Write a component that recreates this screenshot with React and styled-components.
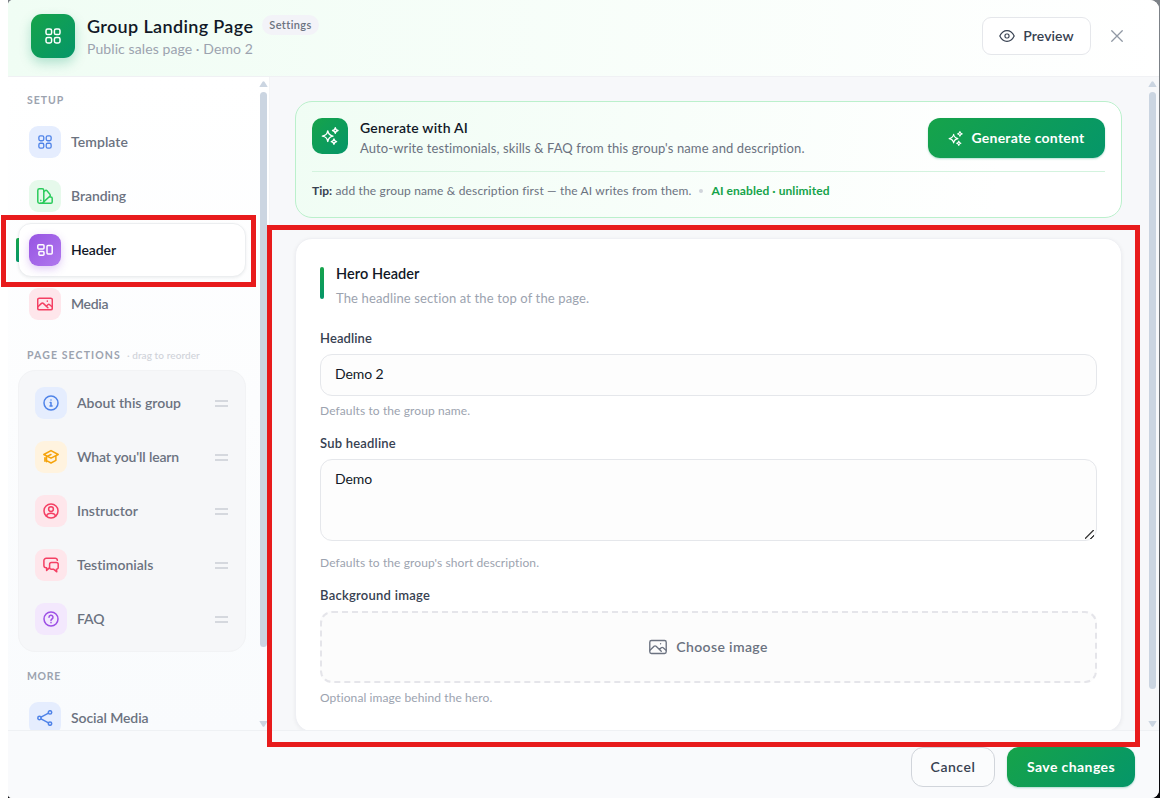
import React from 'react';
import styled, { createGlobalStyle, css } from 'styled-components';

const GlobalStyle = createGlobalStyle`
  * { box-sizing: border-box; }
  body {
    margin: 0;
    background: #fff;
    font-family: Lato, "Liberation Sans", sans-serif;
    font-variant-ligatures: none;
    overflow: hidden;
  }
  button, input, textarea { font-family: inherit; font-variant-ligatures: none; }
`;

const GREEN = 'linear-gradient(135deg, #16a34a 0%, #059669 100%)';

/* ---------- frame ---------- */

const Backdrop = styled.div`
  width: 1160px;
  height: 798px;
  padding: 0 1px 0 8px;
  background: linear-gradient(90deg, #fff 8px, transparent 8px),
    linear-gradient(180deg, #7d8288 0%, #6f757b 60%, #08080c 97%);
  overflow: hidden;
`;

const Modal = styled.div`
  height: 798px;
  display: flex;
  flex-direction: column;
  background: #fff;
  border-radius: 5px 9px 8px 4px;
  overflow: hidden;
`;

const Header = styled.header`
  display: flex;
  align-items: center;
  flex: none;
  height: 77px;
  padding: 0 32px 4px 23px;
  border-bottom: 1px solid #f0f1f4;
  background: linear-gradient(90deg, #f0fdf4 0%, #ffffff 100%);
`;

const Logo = styled.div`
  display: grid;
  place-items: center;
  width: 44px;
  height: 44px;
  margin-right: 12px;
  border-radius: 11px;
  color: #fff;
  background: ${GREEN};
  box-shadow: 0 5px 12px rgba(5, 150, 105, 0.27);
`;

const HeaderText = styled.div`
  flex: 1;
  display: flex;
  flex-direction: column;
  gap: 1px;
`;

const TitleRow = styled.div`
  display: flex;
  align-items: center;
  gap: 9px;
  height: 23px;
`;

const Title = styled.h1`
  margin: 0;
  padding-top: 1px;
  font-size: 18px;
  line-height: 24px;
  font-weight: 600;
  letter-spacing: 0.35px;
  color: #111827;
`;

const Pill = styled.span`
  height: 20px;
  padding: 0 7.5px 0 7px;
  border-radius: 10px;
  background: #f3f3f8;
  font-size: 11px;
  line-height: 20px;
  font-weight: 600;
  letter-spacing: 0.38px;
  color: #6b7280;
`;

const Subtitle = styled.div`
  font-size: 14px;
  line-height: 21px;
  letter-spacing: 0.09px;
  color: #9ca3af;
`;

const CloseButton = styled.button`
  display: grid;
  place-items: center;
  width: 24px;
  height: 24px;
  margin-left: 14px;
  margin-right: -2px;
  padding: 0;
  border: 0;
  background: none;
  color: #9098a4;
`;

const Button = styled.button`
  display: flex;
  align-items: center;
  justify-content: center;
  flex: none;
  gap: 8px;
  width: ${(p) => p.$width}px;
  height: ${(p) => p.$height || 40}px;
  padding: 0 0 2px;
  border-radius: ${(p) => p.$radius || 12}px;
  font-size: 14px;
  letter-spacing: ${(p) => p.$tracking}px;
  svg { position: relative; top: 1px; }
  ${(p) =>
    p.$primary
      ? css`
          border: 0;
          color: #fff;
          font-weight: 700;
          background: ${GREEN};
          box-shadow: 0 1px 2px rgba(5, 150, 105, 0.3);
        `
      : css`
          border: 1px solid ${p.$line || '#e5e7eb'};
          color: #374151;
          font-weight: 600;
          background: ${p.$fill || '#fff'};
        `}
`;

const Body = styled.div`
  display: flex;
  flex: none;
  height: 653px;
  min-height: 0;
`;

const Footer = styled.footer`
  display: flex;
  justify-content: flex-end;
  gap: 12px;
  flex: 1;
  padding: 16px 24px 0 0;
  border-top: 1px solid #eff1f4;
  background: #f9fafc;
`;

/* ---------- scrollbar ---------- */

const Rail = styled.div`
  display: flex;
  flex-direction: column;
  align-items: center;
  flex: none;
  width: 9px;
  margin-right: ${(p) => p.$inset || 0}px;
  padding: 4px 0 3px;
`;

const Thumb = styled.div`
  width: 7px;
  height: ${(p) => p.$length}px;
  margin: 5px 0 auto;
  border-radius: 4px;
  background: #cbd5e1;
`;

const Arrow = ({ down }) => (
  <svg width="9" height="6" viewBox="0 0 9 6" fill="#cbd5e1">
    <path d={down ? 'M.3 0H8.7L5.5 5.3Q4.5 6.4 3.5 5.3Z' : 'M.3 6H8.7L5.5.7Q4.5-.4 3.5.7Z'} />
  </svg>
);

const Scrollbar = ({ length, inset }) => (
  <Rail $inset={inset}>
    <Arrow />
    <Thumb $length={length} />
    <Arrow down />
  </Rail>
);

/* ---------- sidebar ---------- */

const Sidebar = styled.aside`
  display: flex;
  flex: none;
  width: 262px;
  padding-right: 1px;
  border-right: 1px solid #f3f4f6;
  background: linear-gradient(180deg, #ffffff 0%, #f9fbfd 100%);
`;

const Nav = styled.nav`
  flex: 1;
  overflow: hidden;
  padding: 14px 13px 0 10px;
`;

const GroupLabel = styled.div`
  display: flex;
  align-items: center;
  gap: 6px;
  height: 20px;
  margin: ${(p) => p.$margin};
  padding: 0 0 2px 9px;
  font-size: 10.5px;
  font-weight: 700;
  letter-spacing: ${(p) => p.$tracking}px;
  color: #9ca3af;
`;

const Hint = styled.span`
  font-size: 10px;
  font-weight: 500;
  letter-spacing: 0.09px;
  color: #cfd2d9;
`;

const Item = styled.div`
  position: relative;
  display: flex;
  align-items: center;
  gap: 10px;
  height: 54px;
  padding: 0 11px 0 10px;
  border: 1px solid transparent;
  border-radius: 13px;
  font-size: 14px;
  font-weight: 600;
  letter-spacing: ${(p) => p.$tracking}px;
  color: #6b7280;
  ${(p) =>
    p.$active &&
    css`
      color: #111827;
      background: #fff;
      border-color: #eceef0;
      box-shadow: 0 1px 3px rgba(15, 23, 42, 0.07);
      &::before {
        content: '';
        position: absolute;
        left: -3px;
        top: 14px;
        width: 3px;
        height: 24px;
        border-radius: 2px 0 0 2px;
        background: linear-gradient(180deg, #16a34a, #059669);
      }
    `}
`;

const ItemText = styled.span`
  flex: 1;
  padding-bottom: 2px;
`;

const IconTile = styled.span`
  display: grid;
  place-items: center;
  flex: none;
  width: 32px;
  height: 32px;
  border-radius: 9px;
  color: ${(p) => p.$color};
  background: ${(p) => p.$bg};
  box-shadow: ${(p) => p.$shadow || 'none'};
`;

const Sections = styled.div`
  padding: 5px;
  border: 1px solid #f2f3f5;
  border-radius: 17px;
  background: #f6f7f9;
`;

const Handle = styled.span`
  width: 13px;
  height: 7px;
  border-top: 2px solid #d5d8de;
  border-bottom: 2px solid #d5d8de;
`;

/* ---------- main ---------- */

const Main = styled.main`
  flex: 1;
  display: flex;
  background: #f7f8fa;
`;

const Scroll = styled.div`
  flex: 1;
  overflow: hidden;
  padding: 24px 26px 0 25px;
`;

const AiCard = styled.section`
  height: 117px;
  margin-bottom: 20px;
  padding: 16px;
  border: 1px solid #bbf0cc;
  border-radius: 17px;
  background: linear-gradient(100deg, #f0fdf4 0%, #ffffff 85%);
`;

const AiTop = styled.div`
  display: flex;
  height: 54px;
  border-bottom: 1px solid #d3f3de;
`;

const AiTile = styled.div`
  display: grid;
  place-items: center;
  width: 36px;
  height: 36px;
  margin-right: 12px;
  border-radius: 10px;
  color: #fff;
  background: ${GREEN};
`;

const AiText = styled.div`
  flex: 1;
  margin-top: -1px;
`;

const AiTitle = styled.div`
  font-size: 14px;
  line-height: 21px;
  font-weight: 600;
  letter-spacing: 0.2px;
  color: #111827;
`;

const AiDescription = styled.div`
  font-size: 13px;
  line-height: 20px;
  letter-spacing: 0.105px;
  color: #6b7280;
`;

const Tip = styled.div`
  display: flex;
  align-items: center;
  height: 18px;
  margin-top: 9px;
  font-size: 12px;
  letter-spacing: 0.15px;
  color: #6b7280;
  white-space: nowrap;
  b { width: 23.5px; letter-spacing: 0; color: #374151; }
  i { width: 4px; height: 4px; margin: 1px 8.5px 0 7.5px; border-radius: 50%; background: #d1d5db; }
  strong { letter-spacing: 0.07px; color: #16a34a; }
`;

const Card = styled.section`
  height: 494px;
  padding: 24px;
  border: 1px solid #eff0f4;
  border-radius: 17px;
  background: #fff;
  box-shadow: 0 1px 4px rgba(15, 23, 42, 0.06);
`;

const CardHead = styled.div`
  display: flex;
  gap: 12px;
  height: 45px;
  margin-bottom: 22px;
  &::before {
    content: '';
    width: 4px;
    height: 32px;
    margin-top: 4px;
    border-radius: 2px;
    background: linear-gradient(180deg, #16a34a, #059669);
  }
`;

const CardTitle = styled.h2`
  margin: 0 0 3px;
  font-size: 14.5px;
  line-height: 22px;
  font-weight: 600;
  letter-spacing: 0.07px;
  color: #111827;
`;

const CardSubtitle = styled.div`
  font-size: 13px;
  line-height: 20px;
  letter-spacing: 0.135px;
  color: #9ca3af;
`;

const Label = styled.label`
  display: block;
  height: 17px;
  margin-bottom: 7px;
  font-size: 13px;
  line-height: 17px;
  font-weight: 600;
  letter-spacing: ${(p) => p.$tracking}px;
  color: #374151;
`;

const control = css`
  display: block;
  width: 100%;
  border: 1px solid #e5e7eb;
  border-radius: 12px;
  background: #fdfdfd;
  font-size: 14px;
  line-height: 20px;
  letter-spacing: -0.1px;
  color: #111827;
  outline: none;
`;

const Input = styled.input`
  ${control}
  height: 42px;
  padding: 0 14px 3px;
`;

const TextArea = styled.textarea`
  ${control}
  height: 82px;
  padding: 9px 14px;
  resize: vertical;
  &::-webkit-resizer {
    background:
      linear-gradient(to bottom right, transparent 43%, #3f3f3f 45% 54%, transparent 56%) 4px 5px / 9px 9px no-repeat,
      linear-gradient(to bottom right, transparent 38%, #3f3f3f 42% 62%, transparent 66%) 9px 10px / 4px 4px no-repeat;
  }
`;

const Help = styled.div`
  height: 18px;
  margin: ${(p) => p.$top || 6}px 0 15px;
  font-size: 12px;
  line-height: 18px;
  letter-spacing: 0.1px;
  color: #9ca3af;
`;

const DropZone = styled.div`
  display: flex;
  align-items: center;
  justify-content: center;
  gap: 9px;
  height: 72px;
  padding-bottom: 2px;
  border: 2px dashed #e5e5ea;
  border-radius: 12px;
  background: #fcfcfc;
  font-size: 14px;
  font-weight: 600;
  letter-spacing: 0.38px;
  color: #6b7280;
  svg { position: relative; top: 1px; }
`;

/* Annotation rectangles lie over the dialog */
const Marker = styled.div`
  position: absolute;
  left: ${(p) => p.$x}px;
  top: ${(p) => p.$y}px;
  width: ${(p) => p.$w}px;
  height: ${(p) => p.$h}px;
  border: 5px solid #e81b1c;
  pointer-events: none;
`;

/* ---------- icons ---------- */

const glyphs = {
  grid: (
    <>
      <rect x="1" y="1" width="5.6" height="5.6" rx="1.7" />
      <rect x="9.4" y="1" width="5.6" height="5.6" rx="1.7" />
      <rect x="1" y="9.4" width="5.6" height="5.6" rx="1.7" />
      <rect x="9.4" y="9.4" width="5.6" height="5.6" rx="1.7" />
    </>
  ),
  swatch: (
    <>
      <rect x=".8" y=".8" width="6" height="14.4" rx="1.6" />
      <path d="M6.8 3.7 8.1 2.6a1.3 1.3 0 0 1 1.9.1l3 3.7a1.3 1.3 0 0 1-.2 1.8L5.9 14.6M12 9h1.9a1.3 1.3 0 0 1 1.3 1.3v3.6a1.3 1.3 0 0 1-1.3 1.3H3.6M3.8 12.3v.1" />
    </>
  ),
  layout: (
    <>
      <rect x=".8" y="2.8" width="6.2" height="4.2" rx="1" />
      <rect x="1.9" y="9.6" width="5.1" height="3.6" rx="1" />
      <rect x="10" y="3.5" width="5.2" height="8.6" rx="1" />
    </>
  ),
  image: (
    <>
      <rect x=".7" y="2.2" width="14.6" height="11.6" rx="1.5" />
      <path d="M.9 10.8 4.5 7.4a1.3 1.3 0 0 1 1.8 0l4.6 4.4M9.2 10.2l1.7-1.5a1.3 1.3 0 0 1 1.7 0l2.5 2.1M10.3 5.1v.1" />
    </>
  ),
  info: (
    <>
      <circle cx="8" cy="8" r="7" />
      <path d="M7.2 7.5H8v3.4M7 11h2.1M8 5v.1" />
    </>
  ),
  cap: (
    <path d="M8 1.6 15.2 5.5 8 9.2.8 5.5ZM3.5 7.2v5.6M12.900 7.200v4.100L8 14 4.600 12.100M8 5.500 3.500 7.600M1.900 8.700v3.500" />
  ),
  user: (
    <>
      <circle cx="8" cy="8" r="7" />
      <circle cx="8" cy="6.1" r="2.4" />
      <path d="M3.4 13.1c.7-1.8 2.5-2.8 4.600-2.8s3.900 1 4.600 2.800" />
    </>
  ),
  chat: (
    <>
      <path d="M3.600 10.700v2.700l2.800-2.500M3.600 10.700H3.200A2.300 2.300 0 0 1 .9 8.400V3.600a2.300 2.300 0 0 1 2.300-2.300h8.900a2.300 2.300 0 0 1 2.300 2" />
      <path d="M8.400 5.500h5a1.800 1.800 0 0 1 1.800 1.800v3.200a1.800 1.800 0 0 1-1.800 1.800l.4 2.500-3-2.500H8.400a1.800 1.800 0 0 1-1.800-1.800V7.300a1.800 1.800 0 0 1 1.800-1.800Z" />
    </>
  ),
  question: (
    <>
      <circle cx="8" cy="8" r="7" />
      <path d="M6 6.300a2 2 0 1 1 3 1.700c-.7.4-1 .7-1 1.400M8 11.600v.1" />
    </>
  ),
  share: (
    <>
      <circle cx="2.500" cy="8" r="1.700" />
      <circle cx="13" cy="2.400" r="1.700" />
      <circle cx="13" cy="13.600" r="1.700" />
      <path d="M4 7.200 11.500 3.200M4 8.800 11.500 12.800" />
    </>
  ),
  sparkles: (
    <>
      <path d="M6 3.500c.5 3 1.500 4 4.600 4.600C7.500 8.700 6.500 9.700 6 12.800 5.500 9.700 4.500 8.700 1.200 8.100 4.500 7.500 5.500 6.500 6 3.500Z" />
      <path d="M12.700.7c.3 1.600.8 2.100 2.400 2.400-1.600.3-2.100.8-2.400 2.400-.3-1.600-.8-2.100-2.400-2.400 1.600-.3 2.100-.8 2.400-2.400ZM11.500 10.700c.3 1.500.8 2 2.300 2.300-1.500.3-2 .8-2.300 2.300-.3-1.500-.8-2-2.300-2.300 1.500-.3 2-.8 2.300-2.300Z" />
    </>
  ),
  eye: (
    <>
      <path d="M.8 8C2.500 4.500 5 2.700 8 2.700S13.500 4.500 15.200 8c-1.700 3.500-4.200 5.300-7.200 5.300S2.500 11.500.8 8Z" />
      <rect x="6" y="6" width="4" height="4" rx="1.500" />
    </>
  ),
  close: <path d="M2 2 14 14M14 2 2 14" />,
};

const Icon = ({ name, size = 16, stroke = 1.5 }) => (
  <svg
    width={size}
    height={size}
    viewBox="0 0 16 16"
    fill="none"
    stroke="currentColor"
    strokeWidth={stroke}
    strokeLinecap="round"
    strokeLinejoin="round"
  >
    {glyphs[name]}
  </svg>
);

/* ---------- data ---------- */

const blue = { $color: '#4f83e8', $bg: '#e5edfe' };
const green = { $color: '#2bcb5c', $bg: '#e6f9eb' };
const rose = { $color: '#f43f63', $bg: '#fee6eb' };
const amber = { $color: '#f5a30b', $bg: '#fff3df' };
const violet = { $color: '#9d50e5', $bg: '#f3e8fd' };
const violetSolid = {
  $color: '#fff',
  $bg: 'linear-gradient(135deg, #9754e2, #b078ee)',
  $shadow: '0 3px 8px rgba(151, 84, 226, 0.3)',
};

const setup = [
  { name: 'Template', icon: 'grid', size: 14, tone: blue, tracking: 0.07 },
  { name: 'Branding', icon: 'swatch', tone: green, tracking: -0.06 },
  { name: 'Header', icon: 'layout', tone: violetSolid, tracking: -0.08, active: true },
  { name: 'Media', icon: 'image', tone: rose, tracking: -0.3 },
];

const sections = [
  { name: 'About this group', icon: 'info', tone: blue, tracking: 0 },
  { name: "What you'll learn", icon: 'cap', tone: amber, tracking: -0.15 },
  { name: 'Instructor', icon: 'user', tone: rose, tracking: 0 },
  { name: 'Testimonials', icon: 'chat', tone: rose, tracking: 0 },
  { name: 'FAQ', icon: 'question', tone: violet, tracking: -0.07 },
];

const NavItem = ({ item, draggable }) => (
  <Item $active={item.active} $tracking={item.tracking}>
    <IconTile {...item.tone}>
      <Icon name={item.icon} size={item.size} />
    </IconTile>
    <ItemText>{item.name}</ItemText>
    {draggable && <Handle />}
  </Item>
);

export default function App() {
  return (
    <Backdrop>
      <GlobalStyle />
      <Modal>
        <Header>
          <Logo>
            <Icon name="grid" />
          </Logo>
          <HeaderText>
            <TitleRow>
              <Title>Group Landing Page</Title>
              <Pill>Settings</Pill>
            </TitleRow>
            <Subtitle>Public sales page · Demo 2</Subtitle>
          </HeaderText>
          <Button $width={109} $height={38} $radius={9} $tracking={0.09}>
            <Icon name="eye" stroke={1.2} />
            Preview
          </Button>
          <CloseButton aria-label="Close">
            <Icon name="close" size={14} stroke={1.5} />
          </CloseButton>
        </Header>

        <Body>
          <Sidebar>
            <Nav>
              <GroupLabel $margin="0 0 4px" $tracking={0.95}>SETUP</GroupLabel>
              {setup.map((item) => (
                <NavItem key={item.name} item={item} />
              ))}
              <GroupLabel $margin="15px 0 4px" $tracking={1.1}>
                PAGE SECTIONS
                <Hint>· drag to reorder</Hint>
              </GroupLabel>
              <Sections>
                {sections.map((item) => (
                  <NavItem key={item.name} item={item} draggable />
                ))}
              </Sections>
              <GroupLabel $margin="15px 0 4px" $tracking={0.7}>MORE</GroupLabel>
              <NavItem item={{ name: 'Social Media', icon: 'share', tone: blue, tracking: -0.08 }} />
            </Nav>
            <Scrollbar length={555} />
          </Sidebar>

          <Main>
            <Scroll>
              <AiCard>
                <AiTop>
                  <AiTile>
                    <Icon name="sparkles" size={18} stroke={1.3} />
                  </AiTile>
                  <AiText>
                    <AiTitle>Generate with AI</AiTitle>
                    <AiDescription>
                      Auto-write testimonials, skills &amp; FAQ from this group's name and description.
                    </AiDescription>
                  </AiText>
                  <Button $primary $width={177} $tracking={0.24}>
                    <Icon name="sparkles" size={15} stroke={1.2} />
                    Generate content
                  </Button>
                </AiTop>
                <Tip>
                  <b>Tip:</b>
                  <span>add the group name &amp; description first — the AI writes from them.</span>
                  <i />
                  <strong>AI enabled · unlimited</strong>
                </Tip>
              </AiCard>

              <Card>
                <CardHead>
                  <div>
                    <CardTitle>Hero Header</CardTitle>
                    <CardSubtitle>The headline section at the top of the page.</CardSubtitle>
                  </div>
                </CardHead>
                <Label $tracking={0.11}>Headline</Label>
                <Input defaultValue="Demo 2" />
                <Help>Defaults to the group name.</Help>
                <Label $tracking={0.21}>Sub headline</Label>
                <TextArea defaultValue="Demo" />
                <Help $top={13}>Defaults to the group's short description.</Help>
                <Label $tracking={0.25}>Background image</Label>
                <DropZone>
                  <Icon name="image" size={18} stroke={1.2} />
                  Choose image
                </DropZone>
                <Help>Optional image behind the hero.</Help>
              </Card>
            </Scroll>
            <Scrollbar length={597} inset={2} />
          </Main>
        </Body>

        <Footer>
          <Button $width={84} $tracking={0.55} $line="#d1d5db" $fill="#fbfcfd">Cancel</Button>
          <Button $primary $width={128} $tracking={0.41}>Save changes</Button>
        </Footer>
      </Modal>
      <Marker $x={1} $y={215} $w={255} $h={72} />
      <Marker $x={267} $y={225} $w={873} $h={522} />
    </Backdrop>
  );
}
